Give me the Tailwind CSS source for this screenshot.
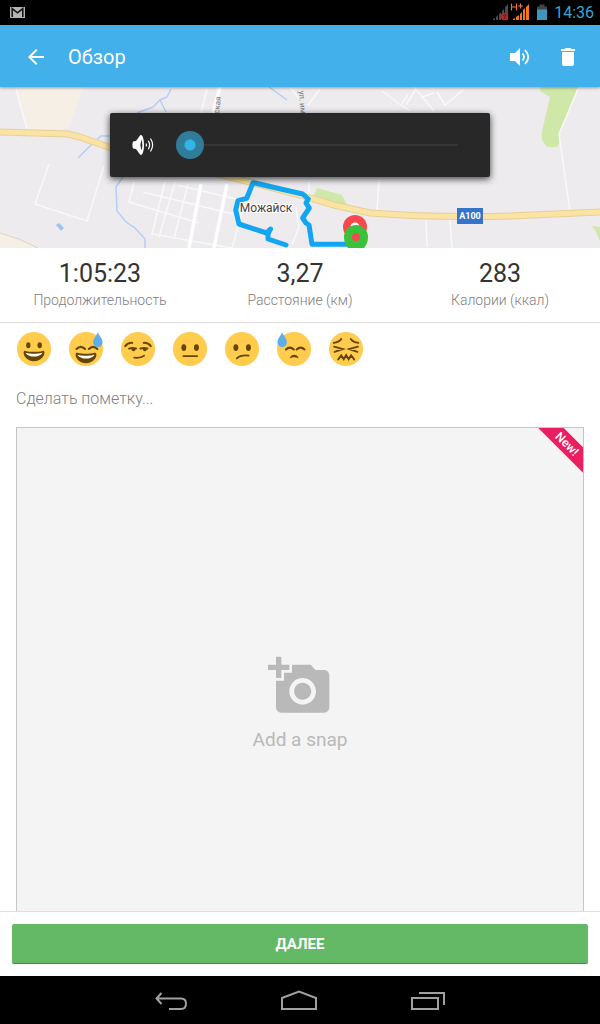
<!DOCTYPE html>
<html lang="ru">

<head>
  <meta charset="UTF-8">
  <meta name="viewport" content="width=device-width, initial-scale=1.0">
  <title>Обзор</title>
  <script src="https://cdn.jsdelivr.net/npm/@tailwindcss/browser@4"></script>
</head>

<body class="h-dvh flex flex-col overflow-hidden bg-white font-['Roboto','Noto_Sans',sans-serif]">

  <!-- Status bar -->
  <div class="h-[25px] shrink-0 bg-black flex items-center justify-between pl-2.5 pr-1.5">
    <svg class="w-[15px] h-[11px]" viewBox="0 0 15 11" aria-label="Gmail">
      <rect width="15" height="11" fill="#b4b4b4" />
      <path d="M2.2 10V1.6l5.3 4.2 5.3-4.2V10" fill="none" stroke="#151515" stroke-width="1.6" />
    </svg>
    <div class="flex items-center">
      <svg class="w-14 h-5 mr-1.5" viewBox="0 0 56 20" aria-hidden="true">
        <path d="M1 17v-1l2-1v2zM4 17v-3l2-2v5zM7 17v-6l2-2v8zM10 17V8l2-2v11zM13 17V4l3-3v16z" fill="#4a4a4a" />
        <circle cx="12.500" cy="13.500" r="3.800" fill="#b3272b" />
        <path d="M11 12.500q1.500-1.800 3 0-.3 1-1.500 1.500v.6M12.500 15.400v.8" stroke="#5c1013" fill="none" />
        <path d="M21 17v-1l2-1v2zM24 17v-3l3-2v5zM28 17v-6l2-2v8zM31 17V7l2-2v12zM34 17V4l3-3v16z" fill="#f5761a" />
        <path d="M19.500.5v7M24.500.5v7M19.500 4h5M26 3h5M28.500.5v5" stroke="#e8763a" stroke-width="1.200" />
        <path d="M47.500 1.500h5v2H55v4H45v-4h2.500z" fill="#444" />
        <path d="M45 6.500h10V17H45z" fill="#3f96b8" />
      </svg>
      <span class="text-base leading-6 text-[#38a5d0]">14:36</span>
    </div>
  </div>

  <!-- App bar -->
  <header class="h-[62px] shrink-0 bg-[#42b0ea] text-white flex items-center px-5 pt-0.5 relative z-10 shadow-[0_1px_3px_rgba(0,0,0,0.35)]">
    <button class="w-8 h-8 flex items-center justify-center" aria-label="Назад">
      <svg class="w-6 h-6" viewBox="0 0 24 24" fill="currentColor">
        <path d="M20 11H7.830l5.590-5.590L12 4l-8 8 8 8 1.410-1.410L7.830 13H20v-2z" />
      </svg>
    </button>
    <h1 class="ml-4 text-xl leading-6 flex-1">Обзор</h1>
    <button class="w-8 h-8 flex items-center justify-center" aria-label="Звук">
      <svg class="w-6 h-6" viewBox="0 0 24 24">
        <path d="M2 8v8h5l5 5V3L7 8z" fill="currentColor" />
        <path d="M14.500 8.500q3 3.500 0 7M17 5q6.500 7 0 14" fill="none" stroke="currentColor" stroke-width="1.800" />
      </svg>
    </button>
    <button class="w-8 h-8 ml-4 -mr-1 flex items-center justify-center" aria-label="Удалить">
      <svg class="w-6 h-6" viewBox="0 0 24 24" fill="currentColor">
        <path d="M6 19c0 1.100.9 2 2 2h8c1.100 0 2-.9 2-2V7H6v12zM19 4h-3.500l-1-1h-5l-1 1H5v2h14V4z" />
      </svg>
    </button>
  </header>

  <!-- Map with the volume panel over it -->
  <section class="h-[161px] shrink-0 relative bg-[#edebee]">
    <svg class="w-full h-full" viewBox="0 0 600 161" preserveAspectRatio="xMidYMid slice" aria-label="Карта маршрута">
      <path d="M16 0h67L69 42H28z" fill="#f6efe5" />
      <path d="M0 145q20 6 42 16H0z" fill="#f6efe5" />
      <path d="M540 0h38l-19 47q3 6-2 13h-10q-8-7-4-20l7-30-10-6z" fill="#cfe8a8" />
      <path d="M317 101l25 7 6 11-35-9zM592 139l8 1v14l-4-9z" fill="#cfe8a8" />
      <!-- side streets -->
      <g fill="none" stroke="#f9f9fa" stroke-width="1.500">
        <path d="M16 2l11 40M49 77L35 117l52 17 17-55" />
        <path d="M134 95l-5 20 70 21M165 95l-13 52 80 14M177 98l68 16M175 95l-16 55M188 97l-14 55M143 105l90 22M207 2l-6 24M245 114l-13 47M296 120l3 20-7 18" />
        <path d="M309 95v12M379 93l-2 30M426 133l1 27M450 133l2 28M320 2l-12 16M382 4l16 12 12 8M402 16l6-8M414 0l20 24M416 2l-10 16M437 5l8 13 18-15M422 10l12-4M559 47l11 78" />
        <path d="M578 2l-19 45M290 0l9 12" />
      </g>
      <path d="M220 0l-7 26M201 97l-12 64M227 97l-13 64" fill="none" stroke="#fff" stroke-width="3.500" />
      <!-- water -->
      <path d="M171 2l-4 8-7 3-7 7-16 6M160 13l6 12M114 49l-13 0-9 8-14 14M123 90l-7 10 1 24 9 11 9 6 10 11v10M269 0l18 13" fill="none" stroke="#b3cff8" stroke-width="1.500" />
      <path d="M56 138l3-2 5 5-3 3z" fill="#9cc4f3" />
      <path d="M0 146q20 5 38 15" fill="none" stroke="#ddd0c4" />
      <!-- main road -->
      <path d="M0 45l68 2 12 3 40 14 110 26 70 18 34 10 36 8q66 5 140 3l90-4" fill="none" stroke="#e6cf98" stroke-width="7" />
      <path d="M0 45l68 2 12 3 40 14 110 26 70 18 34 10 36 8q66 5 140 3l90-4" fill="none" stroke="#fbe3a4" stroke-width="5" />
      <g fill="#777" font-size="8">
        <text transform="translate(219 27) rotate(-83)">ская</text>
        <text transform="translate(299 4) rotate(86)">ул. им</text>
      </g>
      <!-- route -->
      <path d="M286 158l-18-6v-5l2.500-5-4 4-27.500-9-3.300-14 2.300-9.300 8.700-2.400 6.300-15.600 49.700 11.300 5.600 5-2.300 4 3.300 5-6.600 10 3.300 5 3 2 3 19.300h36" fill="none" stroke="#12a6f2" stroke-width="5" stroke-linejoin="round" stroke-linecap="round" />
      <circle cx="355" cy="140" r="12" fill="#f8484f" />
      <circle cx="355" cy="140" r="4.500" fill="#fff" />
      <path d="M344 150a12 12 0 1 1 24 0q0 6-4 11h-16q-4-5-4-11z" fill="#3cc13b" />
      <circle cx="356" cy="150" r="4" fill="#f8484f" />
      <text x="266" y="125" text-anchor="middle" font-size="12" fill="#4a4038" stroke="#fff" stroke-width="2" paint-order="stroke">Можайск</text>
      <rect x="457" y="121" width="26" height="16" fill="#3575c8" />
      <text x="470" y="132" text-anchor="middle" font-size="9" font-weight="700" fill="#fff">A100</text>
    </svg>

    <div class="absolute top-[26px] inset-x-[110px] h-16 bg-[#282828] rounded-xs shadow-[0_2px_7px_rgba(0,0,0,0.75)] flex items-center pl-[22px] pr-[18px]">
      <svg class="w-6 h-6 mr-5 shrink-0" viewBox="0 0 24 24" aria-hidden="true">
        <path d="M1 8.500L4 8 8 2.500C10 .5 12 5 12 12s-2 11.500-4 9.500L4 16l-3-.5q-1.200-3.500 0-7z" fill="#fff" />
        <path d="M9.300 6.500q2.200 5.500 0 11-1.800-5.500 0-11z" fill="#282828" />
        <path d="M14 10.500q1 1.500 0 3M16.300 7.800q2.600 4.200 0 8.400M18.500 5.500q4.200 6.500 0 13" fill="none" stroke="#fff" stroke-width="1.200" />
      </svg>
      <input type="range" min="0" max="15" value="0" aria-label="Громкость"
        class="flex-1 min-w-0 h-7 appearance-none bg-[linear-gradient(#363636,#363636)] bg-no-repeat bg-center bg-[length:calc(100%-28px)_2px] [&::-webkit-slider-thumb]:appearance-none [&::-webkit-slider-thumb]:w-7 [&::-webkit-slider-thumb]:h-7 [&::-webkit-slider-thumb]:rounded-full [&::-webkit-slider-thumb]:bg-[radial-gradient(circle,#33b5e5_5px,#2f7d9b_6px)]">
    </div>
  </section>

  <!-- Workout totals -->
  <dl class="h-[75px] shrink-0 grid grid-cols-3 border-b border-[#dedede] text-center pt-2.5">
    <div class="flex flex-col">
      <dd class="text-[25px] leading-8 text-[#333]">1:05:23</dd>
      <dt class="order-last text-sm leading-5 font-light text-[#808080]">Продолжительность</dt>
    </div>
    <div class="flex flex-col">
      <dd class="text-[25px] leading-8 text-[#333]">3,27</dd>
      <dt class="order-last text-sm leading-5 font-light text-[#808080]">Расстояние (км)</dt>
    </div>
    <div class="flex flex-col">
      <dd class="text-[25px] leading-8 text-[#333]">283</dd>
      <dt class="order-last text-sm leading-5 font-light text-[#808080]">Калории (ккал)</dt>
    </div>
  </dl>

  <main class="flex-1 min-h-0 overflow-hidden px-4 pt-2">
    <!-- Mood picker -->
    <div class="flex gap-4">
      <button class="w-9 h-9" aria-label="Отлично">
        <svg viewBox="-1 -1 38 38">
          <circle cx="18" cy="18" r="18" fill="#ffcc4d" />
          <g fill="#664500">
            <ellipse cx="12" cy="14" rx="2.300" ry="3.200" />
            <ellipse cx="24" cy="14" rx="2.300" ry="3.200" />
            <path d="M18 21c-3.600 0-6-.4-9-1-.7-.1-2 0-2 2 0 4 4.600 9 11 9s11-5 11-9c0-2-1.300-2.100-2-2-3 .6-5.400 1-9 1z" />
          </g>
          <path d="M9 22s3 1 9 1 9-1 9-1-2 4-9 4-9-4-9-4z" fill="#fff" />
        </svg>
      </button>
      <button class="w-9 h-9" aria-label="Весело, но жарко">
        <svg viewBox="-1 -1 38 38">
          <circle cx="18" cy="18" r="18" fill="#ffcc4d" />
          <path d="M8 18q4.500-4.500 9 0M21 18q4.500-4.500 9 0" fill="none" stroke="#664500" stroke-width="2.200" stroke-linecap="round" />
          <path d="M18 23c-3.600 0-6-.4-9-1-.7-.1-2 0-2 2 0 4 4.600 9 11 9s11-5 11-9c0-2-1.300-2.100-2-2-3 .6-5.400 1-9 1z" fill="#664500" />
          <path d="M9 24s3 1 9 1 9-1 9-1-2 4-9 4-9-4-9-4z" fill="#fff" />
          <path d="M30.500 0c-1 4-5 6.500-5 11a5 5 0 0 0 10 0c0-4.500-4-7-5-11z" fill="#5dadec" />
        </svg>
      </button>
      <button class="w-9 h-9" aria-label="Легко">
        <svg viewBox="-1 -1 38 38">
          <circle cx="18" cy="18" r="18" fill="#ffcc4d" />
          <g fill="none" stroke="#664500" stroke-linecap="round">
            <path d="M4.500 15q3-4 7.500-3.500M31.500 15q-3-4-7.500-3.500" stroke-width="2" />
            <path d="M8.500 17.500q3-1 7.500 0M20.500 17.500q4-1 7.500 0" stroke-width="2" />
            <path d="M14 27.200q7 .8 10.500-2.200" stroke-width="1.800" />
          </g>
          <path d="M11 17h4.500q0 3.500-2.200 3.500T11 17zM23 17h4.500q0 3.500-2.200 3.500T23 17z" fill="#664500" />
        </svg>
      </button>
      <button class="w-9 h-9" aria-label="Нормально">
        <svg viewBox="-1 -1 38 38">
          <circle cx="18" cy="18" r="18" fill="#ffcc4d" />
          <ellipse cx="11.500" cy="16.500" rx="2.600" ry="3.600" fill="#664500" />
          <ellipse cx="24.800" cy="16.500" rx="2.600" ry="3.600" fill="#664500" />
          <path d="M11 25.500h14.500" stroke="#664500" stroke-width="2" stroke-linecap="round" />
        </svg>
      </button>
      <button class="w-9 h-9" aria-label="Так себе">
        <svg viewBox="-1 -1 38 38">
          <circle cx="18" cy="18" r="18" fill="#ffcc4d" />
          <ellipse cx="11.500" cy="16.500" rx="2.600" ry="3.600" fill="#664500" />
          <ellipse cx="24.800" cy="16.500" rx="2.600" ry="3.600" fill="#664500" />
          <path d="M12.500 28q4-4 12.500-3" fill="none" stroke="#664500" stroke-width="1.900" stroke-linecap="round" />
        </svg>
      </button>
      <button class="w-9 h-9" aria-label="Тяжело">
        <svg viewBox="-1 -1 38 38">
          <circle cx="18" cy="18" r="18" fill="#ffcc4d" />
          <path d="M9.500 18.500q4.200-4 8.300 0M20.800 18.500q4.200-4 8.300 0" fill="none" stroke="#664500" stroke-width="2.200" stroke-linecap="round" />
          <path d="M13.500 28q1-4 4.700-4t4.700 4q-4.700-2.500-9.400 0z" fill="#664500" />
          <path d="M5.500 0c-1 4-5 6.500-5 11a5 5 0 0 0 10 0c0-4.500-4-7-5-11z" fill="#5dadec" />
        </svg>
      </button>
      <button class="w-9 h-9" aria-label="Очень тяжело">
        <svg viewBox="-1 -1 38 38">
          <circle cx="18" cy="18" r="18" fill="#ffcc4d" />
          <g fill="none" stroke="#664500" stroke-width="2" stroke-linecap="round">
            <path d="M5 11.500q5.500-.5 8-4M31 11.500q-5.500-.5-8-4" />
            <path d="M5.500 15.500l9 2.500-8.500 3M30.500 15.500l-9 2.500 8.500 3" />
            <path d="M9.800 29l3.200-4.200 2.600 4 2.600-4.300 2.600 4.300 2.600-4 3.200 4.200" />
          </g>
        </svg>
      </button>
    </div>

    <input type="text" placeholder="Сделать пометку..." aria-label="Заметка"
      class="block w-full mt-5 mb-4 h-6 text-base font-light text-[#333] placeholder:text-[#808080] outline-none">

    <!-- Photo -->
    <div class="relative aspect-square border border-[#c6c6c6] bg-[#f4f4f4] overflow-hidden">
      <button class="w-full h-full flex flex-col items-center justify-center gap-2 pb-3.5 text-[#b9b9b9]">
        <svg class="w-16 h-16" viewBox="0 0 24 24" fill="currentColor">
          <path d="M3 4V1h2v3h3v2H5v3H3V6H0V4h3zm3 6V7h3V4h7l1.830 2H21c1.100 0 2 .9 2 2v12c0 1.100-.9 2-2 2H5c-1.100 0-2-.9-2-2V10h3zm7 9c2.760 0 5-2.240 5-5s-2.240-5-5-5-5 2.240-5 5 2.240 5 5 5zm-3.200-5c0 1.770 1.430 3.200 3.200 3.200s3.200-1.430 3.200-3.200-1.430-3.200-3.200-3.200-3.200 1.430-3.200 3.200z" />
        </svg>
        <span class="text-[19px] leading-7">Add a snap</span>
      </button>
      <span class="absolute top-[7px] -right-[29px] w-[90px] rotate-45 bg-[#e91e63] text-white text-xs leading-[18px] font-medium text-center">New!</span>
    </div>
  </main>

  <footer class="shrink-0 border-t border-[#dedede] p-3 bg-white">
    <button class="block w-full h-10 pt-0.5 rounded-xs bg-[#63b966] border-b border-[#468a4b] text-white text-[15px] font-bold">ДАЛЕЕ</button>
  </footer>

  <!-- System navigation -->
  <nav class="h-12 pt-0.5 shrink-0 bg-black flex items-center justify-center gap-[94px]">
    <button aria-label="Назад">
      <svg class="w-8 h-6" viewBox="0 0 32 24" fill="none" stroke="#a0a0a0" stroke-width="2">
        <path d="M6.500 4L1.500 9.500 6.500 15M1.500 9.500H26q5 0 5 5.200T26 20H14" />
      </svg>
    </button>
    <button aria-label="Домой">
      <svg class="w-9 h-6" viewBox="0 0 36 24" fill="none" stroke="#a0a0a0" stroke-width="2">
        <path d="M1 9L18 2.500 35 9v11H1z" />
      </svg>
    </button>
    <button aria-label="Недавние">
      <svg class="w-[34px] h-6" viewBox="0 0 34 24" fill="none" stroke="#a0a0a0" stroke-width="2">
        <path d="M1 9h26v11H1zM8 4h25v12" />
      </svg>
    </button>
  </nav>

</body>

</html>
